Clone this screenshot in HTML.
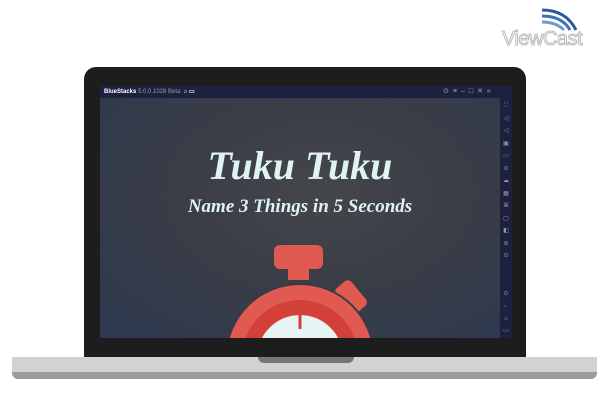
<!DOCTYPE html>
<html><head><style>
body{margin:0;width:602px;height:414px;background:#fff;position:relative;overflow:hidden;font-family:"Liberation Sans",sans-serif}
.abs{position:absolute}
</style></head><body>
<svg class="abs" style="left:536px;top:4px" width="48" height="28" viewBox="0 0 48 28">
<path d="M6 6 Q30 6 40 26" stroke="#2c5a9a" stroke-width="3" fill="none"/>
<path d="M6 12 Q26 12 34 26" stroke="#3f72b5" stroke-width="3" fill="none"/>
<path d="M6 18 Q20 18 28 26" stroke="#6f9bd0" stroke-width="3" fill="none"/>
</svg>
<div class="abs" style="left:502px;top:28px;font-size:20px;color:#fff;-webkit-text-stroke:1px #bbb;letter-spacing:-0.5px">ViewCast</div>

<div class="abs" style="left:84px;top:67px;width:442px;height:292px;background:#1d1d1d;border-radius:12px 12px 0 0"></div>
<div class="abs" style="left:100px;top:86px;width:412px;height:12px;background:#1e2040"></div>
<div class="abs" style="left:104px;top:88px;font-size:6px;color:#fff;font-weight:bold">BlueStacks <span style="color:#999;font-weight:normal">5.0.0.1028 Beta</span>&nbsp;&nbsp;⌂ ▭</div>
<div class="abs" style="left:443px;top:87px;font-size:7px;color:#aaa;letter-spacing:4px">⊙≡–□✕«</div>
<div class="abs" style="left:500px;top:98px;width:12px;height:240px;background:#1e2040"></div>
<div class="abs" style="left:502px;top:100px;width:8px;font-size:6px;color:#99a;line-height:12.5px;text-align:center">⛶<br>◁<br>◁<br>▣<br>▭<br>⊙<br>☁<br>▦<br>⌘<br>▢<br>◧<br>⊜<br>⊙<br><br><br>⊙<br>←<br>⌂<br>▭</div>
<div class="abs" style="left:100px;top:98px;width:400px;height:240px;overflow:hidden;background:radial-gradient(ellipse at 55% 40%,#45464c 0%,#3a3d46 45%,#2d3950 100%)">
 <div class="abs" style="left:0;width:400px;top:44px;text-align:center;font-family:'Liberation Serif',serif;font-style:italic;font-weight:bold;font-size:40px;color:#dff3f2">Tuku Tuku</div>
 <div class="abs" style="left:0;width:400px;top:98px;text-align:center;font-family:'Liberation Serif',serif;font-style:italic;font-weight:bold;font-size:19px;color:#dff3f2">Name 3 Things in 5 Seconds</div>
 <svg class="abs" style="left:0;top:0" width="400" height="240">
  <rect x="174" y="147" width="49" height="24" rx="6" fill="#e05a52"/>
  <rect x="188" y="166" width="21" height="16" fill="#e05a52"/>
  <rect x="241" y="183" width="20" height="32" rx="5" fill="#e05a52" transform="rotate(-40 251 199)"/>
  <circle cx="200" cy="260" r="75" fill="#383b42"/>
  <circle cx="200" cy="260" r="73" fill="#e05a52"/>
  <circle cx="200" cy="260" r="58" fill="#d3403a"/>
  <circle cx="200" cy="260" r="43" fill="#e6f4f4"/>
  <rect x="198.5" y="217" width="3" height="14" fill="#d3403a"/>
 </svg>
</div>
<div class="abs" style="left:12px;top:357px;width:585px;height:16px;background:#d2d2d2"></div>
<div class="abs" style="left:12px;top:372px;width:585px;height:7px;background:#9c9c9c;border-radius:0 0 6px 6px"></div>
<div class="abs" style="left:258px;top:357px;width:96px;height:6px;background:#777;border-radius:0 0 8px 8px"></div>
</body></html>
